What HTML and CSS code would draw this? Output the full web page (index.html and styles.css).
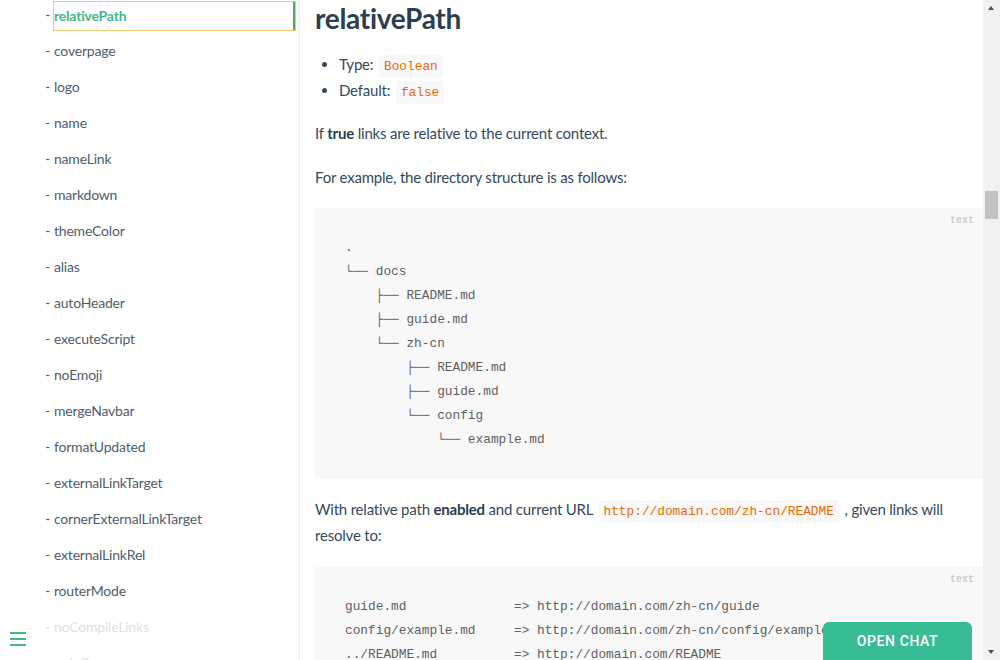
FILE: index.html
```html
<!DOCTYPE html>
<html lang="en">
<head>
<meta charset="utf-8">
<title>relativePath - docsify</title>
<link rel="stylesheet" href="styles.css">
</head>
<body>
<div class="app">
  <aside class="sidebar">
    <ul class="nav">
      <li><a class="active">relativePath</a></li>
      <li><a>coverpage</a></li>
      <li><a>logo</a></li>
      <li><a>name</a></li>
      <li><a>nameLink</a></li>
      <li><a>markdown</a></li>
      <li><a>themeColor</a></li>
      <li><a>alias</a></li>
      <li><a>autoHeader</a></li>
      <li><a>executeScript</a></li>
      <li><a>noEmoji</a></li>
      <li><a>mergeNavbar</a></li>
      <li><a>formatUpdated</a></li>
      <li><a>externalLinkTarget</a></li>
      <li><a>cornerExternalLinkTarget</a></li>
      <li><a>externalLinkRel</a></li>
      <li><a>routerMode</a></li>
      <li><a>noCompileLinks</a></li>
      <li><a>onlyCover</a></li>
    </ul>
    <button class="sidebar-toggle" aria-label="Toggle sidebar">
      <span></span><span></span><span></span>
    </button>
  </aside>

  <main class="content">
    <article class="markdown">
      <h2>relativePath</h2>
      <ul class="props">
        <li>Type: <code>Boolean</code></li>
        <li>Default: <code>false</code></li>
      </ul>
      <p>If <strong>true</strong> links are relative to the current context.</p>
      <p>For example, the directory structure is as follows:</p>
      <pre data-lang="text"><code>.
└── docs
    ├── README.md
    ├── guide.md
    └── zh-cn
        ├── README.md
        ├── guide.md
        └── config
            └── example.md</code></pre>
      <p>With relative path <strong>enabled</strong> and current URL <code>http://domain.com/zh-cn/README</code> , given links will resolve to:</p>
      <pre data-lang="text"><code>guide.md              =&gt; http://domain.com/zh-cn/guide
config/example.md     =&gt; http://domain.com/zh-cn/config/example
../README.md          =&gt; http://domain.com/README
/README.md            =&gt; http://domain.com/README</code></pre>
    </article>
  </main>

  <div class="scrollbar">
    <span class="arrow arrow-up"></span>
    <div class="track"><div class="thumb"></div></div>
    <span class="arrow arrow-down"></span>
  </div>
</div>
<a class="chat-button">OPEN CHAT</a>
</body>
</html>
```

FILE: styles.css
```css
* { box-sizing: border-box; }

html, body {
  margin: 0;
  padding: 0;
  height: 100%;
  overflow: hidden;
  background: #fff;
}

body {
  font-family: "Lato", "Liberation Sans", sans-serif;
  font-size: 15px;
  color: #34495e;
  -webkit-font-smoothing: antialiased;
}

.app {
  display: flex;
  height: 660px;
  overflow: hidden;
}

/* ---------- sidebar ---------- */
.sidebar {
  position: relative;
  flex: 0 0 300px;
  height: 100%;
  border-right: 1px solid #eee;
  overflow: hidden;
}

.nav {
  list-style: none;
  margin: 0;
  padding: 0 4px 0 45px;
}

.nav li {
  display: flex;
  align-items: center;
  margin-bottom: 6px;
  font-size: 14px;
  letter-spacing: -0.2px;
  color: #505d6b;
}

.nav li::before {
  content: "-";
  flex: 0 0 9px;
  line-height: 30px;
}

.nav a {
  flex: 1;
  display: block;
  height: 30px;
  line-height: 30px;
  color: #505d6b;
  cursor: pointer;
}

.nav a.active {
  color: #42b983;
  font-weight: 700;
  margin-top: 1px;
  height: 28px;
  line-height: 28px;
  outline: 1px solid #f0c66f;
  box-shadow: inset -2px 0 0 #5aa85a;
}

.sidebar-toggle {
  position: absolute;
  left: 0;
  bottom: 0;
  width: 284px;
  padding: 10px;
  border: 0;
  background: rgba(255, 255, 255, 0.8);
  display: flex;
  flex-direction: column;
  align-items: flex-start;
  cursor: pointer;
}

.sidebar-toggle span {
  display: block;
  width: 16px;
  height: 2px;
  margin-bottom: 4px;
  background: #42b983;
}

/* ---------- content ---------- */
.content {
  flex: 1;
  min-width: 0;
  height: 100%;
  overflow: hidden;
}

.markdown {
  padding: 0 0 40px 15px;
  letter-spacing: -0.2px;
}

.markdown h2 {
  margin: 0 0 16px;
  font-size: 28px;
  line-height: 36px;
  font-weight: 700;
  letter-spacing: -0.3px;
  color: #2c3e50;
}

.markdown p {
  margin: 18px 0;
  line-height: 25.6px;
}

.markdown strong {
  color: #2c3e50;
  font-weight: 700;
}

.props {
  margin: 0 0 18px;
  padding-left: 24px;
}

.props li {
  line-height: 25.6px;
}

.markdown code {
  font-family: "Liberation Mono", "DejaVu Sans Mono", monospace;
  font-size: 12.8px;
  line-height: 1;
  letter-spacing: 0;
  color: #e96900;
  background: #f8f8f8;
  border-radius: 2px;
  padding: 4px 5px;
  margin: 0 2px;
}

.markdown pre {
  position: relative;
  margin: 18px 0;
  padding: 0 28px 0 30px;
  background: #f8f8f8;
  font-family: "Liberation Mono", "DejaVu Sans Mono", monospace;
  line-height: 24px;
  letter-spacing: 0;
  overflow: hidden;
}

.markdown pre::after {
  content: attr(data-lang);
  position: absolute;
  top: 0;
  right: 0;
  padding: 5px 9px 0;
  height: 15px;
  line-height: 15px;
  font-size: 10px;
  font-weight: 700;
  color: #ccc;
}

.markdown pre code {
  display: block;
  padding: 28px 0 27px;
  margin: 0;
  background: transparent;
  color: #5f5f5f;
  font-size: 12.8px;
  line-height: 24px;
  white-space: pre;
  border-radius: 0;
}

/* ---------- fake scrollbar ---------- */
.scrollbar {
  flex: 0 0 17px;
  height: 100%;
  background: #f1f1f1;
  display: flex;
  flex-direction: column;
  align-items: center;
}

.arrow {
  flex: 0 0 17px;
  width: 17px;
  position: relative;
}

.arrow::before {
  content: "";
  position: absolute;
  left: 5px;
  border-left: 3.5px solid transparent;
  border-right: 3.5px solid transparent;
}

.arrow-up::before {
  top: 6px;
  border-bottom: 4px solid #505050;
}

.arrow-down::before {
  top: 7px;
  border-top: 4px solid #505050;
}

.track {
  flex: 1;
  width: 100%;
  padding: 174px 2px 0;
}

.thumb {
  height: 28px;
  background: #c1c1c1;
}

/* ---------- chat button ---------- */
.chat-button {
  position: fixed;
  right: 28px;
  bottom: -10px;
  width: 149px;
  height: 48px;
  padding-bottom: 10px;
  display: flex;
  align-items: center;
  justify-content: center;
  background: #38bc94;
  color: #fff;
  border-radius: 6px;
  font-family: "Roboto", "Liberation Sans", sans-serif;
  font-size: 14px;
  font-weight: 500;
  letter-spacing: 0.6px;
  cursor: pointer;
}
```
